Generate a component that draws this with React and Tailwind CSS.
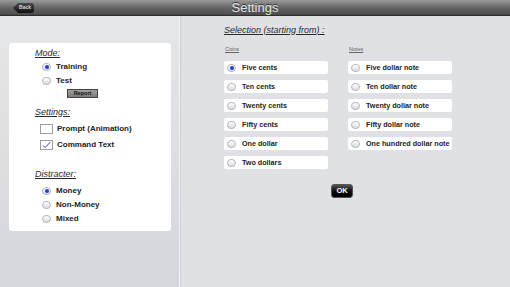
import React from "react";

const coins = ["Five cents", "Ten cents", "Twenty cents", "Fifty cents", "One dollar", "Two dollars"];
const notes = ["Five dollar note", "Ten dollar note", "Twenty dollar note", "Fifty dollar note", "One hundred dollar note"];

function Radio({ on }) {
  return (
    <span className="relative inline-flex h-[8px] w-[9px] shrink-0 items-center justify-center rounded-full border border-[#b4b7bc] bg-gradient-to-b from-[#ffffff] to-[#d9dbdf]">
      {on && <span className="h-[4px] w-[4px] rounded-full bg-[#1f3fd8]" />}
    </span>
  );
}

function Option({ label, on, className = "" }) {
  return (
    <div className={`flex h-[14px] items-center gap-[5px] text-[8px] font-bold leading-none text-[#222] ${className}`}>
      <Radio on={on} />
      <span>{label}</span>
    </div>
  );
}

function Heading({ children, className = "" }) {
  return <div className={`flex h-[14px] items-center text-[9px] italic leading-none text-[#2a2a2a] underline ${className}`}>{children}</div>;
}

function Row({ label, on }) {
  return (
    <div className="flex h-[13px] w-[104px] items-center gap-[6px] whitespace-nowrap rounded-[2px] bg-white pl-[3px] text-[7.2px] font-bold leading-none text-[#222]">
      <Radio on={on} />
      <span>{label}</span>
    </div>
  );
}

function Check({ on, label, className = "" }) {
  return (
    <div className={`flex h-[10px] items-center gap-[4px] text-[8px] font-bold leading-none text-[#222] ${className}`}>
      <span className="flex h-[10px] w-[13px] items-center justify-center border border-[#9a9da2] bg-white">
        {on && (
          <svg viewBox="0 0 13 10" className="h-[10px] w-[13px]">
            <path d="M2.5 5.5 L5 8 L11 1.5" fill="none" stroke="#2436c8" strokeWidth="1.1" />
          </svg>
        )}
      </span>
      <span>{label}</span>
    </div>
  );
}

export default function App() {
  return (
    <div className="flex h-[287px] w-[510px] flex-col overflow-hidden" style={{ fontFamily: '"Liberation Sans", Arial, sans-serif' }}>
      {/* barre du haut */}
      <div className="relative flex h-[16px] items-center justify-center border-b border-[#2f2f2f] bg-gradient-to-b from-[#9a9a9a] via-[#666] to-[#4a4a4a]">
        <div className="absolute left-[13px] top-[3px] flex h-[10px] w-[21px] items-center justify-center rounded-[3px] bg-gradient-to-b from-[#4a4a4a] to-[#111] text-[5px] font-bold text-[#ddd] [clip-path:polygon(0_50%,25%_0,100%_0,100%_100%,25%_100%)]">
          <span className="pl-[3px]">Back</span>
        </div>
        <span className="text-[13px] leading-none text-[#e6e6e6] [text-shadow:0_-1px_0_#333]">Settings</span>
      </div>

      <div className="flex flex-1">
        {/* panneau gauche */}
        <div className="w-[179px] bg-gradient-to-b from-[#e6e7e9] to-[#d3d6db] pl-[9px] pt-[27px]">
          <div className="h-[188px] w-[162px] rounded-[3px] bg-white pl-[26px] pt-[3px]">
            <Heading className="h-[13px]">Mode:</Heading>
            <Option label="Training" on className="ml-[7px]" />
            <Option label="Test" className="ml-[7px]" />
            <div className="ml-[32px] mt-[1px] flex h-[9px] w-[31px] items-center justify-center border border-[#444] bg-gradient-to-b from-[#a0a0a0] to-[#7c7c7c] text-[5.5px] font-bold leading-none text-[#111]">
              Report
            </div>
            <Heading className="mt-[7px]">Settings:</Heading>
            <Check label="Prompt (Animation)" className="ml-[5px] mt-[5px]" />
            <Check on label="Command Text" className="ml-[5px] mt-[6px]" />
            <Heading className="mt-[17px]">Distracter:</Heading>
            <div className="ml-[7px] mt-[3px] flex flex-col">
              <Option label="Money" on />
              <Option label="Non-Money" />
              <Option label="Mixed" />
            </div>
          </div>
        </div>

        {/* séparateur */}
        <div className="w-[1px] bg-[#f1f2f4]" />
        <div className="w-[1px] bg-[#cdd0d5]" />

        {/* panneau droit */}
        <div className="flex-1 bg-[#dfe1e5] pl-[43px] pt-[7px]">
          <Heading className="text-[9.5px]">Selection (starting from) :</Heading>
          <div className="mt-[10px] flex gap-[20px]">
            <div className="flex flex-col">
              <div className="h-[7px] pl-[1px] text-[5.5px] leading-none text-[#666] underline">Coins</div>
              <div className="mt-[7px] flex flex-col gap-[6px]">
                {coins.map((c, i) => <Row key={c} label={c} on={i === 0} />)}
              </div>
            </div>
            <div className="flex flex-col">
              <div className="h-[7px] pl-[1px] text-[5.5px] leading-none text-[#666] underline">Notes</div>
              <div className="mt-[7px] flex flex-col gap-[6px]">
                {notes.map((n) => <Row key={n} label={n} />)}
              </div>
            </div>
          </div>
          <div className="ml-[107px] mt-[15px] flex h-[14px] w-[22px] items-center justify-center rounded-[3px] border border-[#555] bg-gradient-to-b from-[#555] via-[#111] to-[#000] text-[7.5px] font-bold leading-none text-white">
            OK
          </div>
        </div>
      </div>
    </div>
  );
}
